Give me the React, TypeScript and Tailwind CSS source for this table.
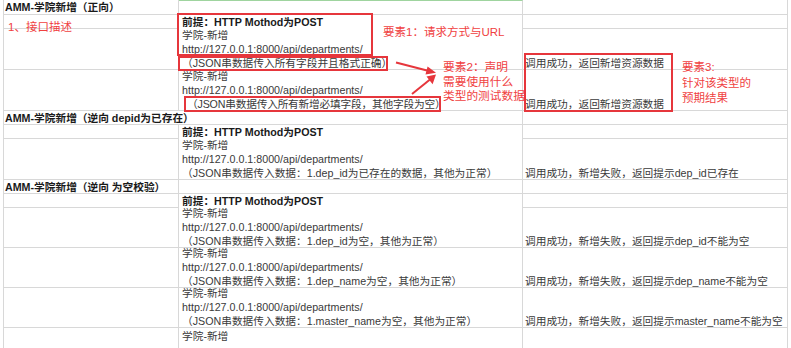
import React from "react";

const PRE = "前提：HTTP Mothod为POST";
const NAME = "学院-新增";
const URL = "http://127.0.0.1:8000/api/departments/";

function ACell({ text, h, noRight }: { text?: string; h: number; noRight?: boolean }) {
  return (
    <div
      className={
        "border-l border-b border-[#d8d8d8] pl-[1px] flex items-center whitespace-nowrap text-[10.7px] font-bold text-[#1a1a1a] leading-[14px] relative z-10 " +
        (noRight ? "" : "border-r ")
      }
      style={{ height: h }}
    >
      {text}
    </div>
  );
}

function PreCell({ h }: { h: number }) {
  return (
    <div className="border-r border-[#d8d8d8] pl-[3px] flex items-center whitespace-nowrap font-bold text-[#1a1a1a] leading-[14px]" style={{ height: h }}>
      {PRE}
    </div>
  );
}

function BodyCell({ h, json, shift }: { h: number; json: string; shift?: boolean }) {
  return (
    <div
      className="border-r border-b border-[#d8d8d8] pl-[3px] flex flex-col justify-end whitespace-nowrap text-[#3a3a3a] leading-[14px]"
      style={{ height: h }}
    >
      <div className="relative top-[1px]">
        <div>{NAME}</div>
        <div>{URL}</div>
        <div className={shift ? "pl-[5px] tracking-[-0.2px]" : ""}>{json}</div>
      </div>
    </div>
  );
}

function CCell({ h, text }: { h: number; text?: string }) {
  return (
    <div
      className="border-r border-b border-[#d8d8d8] pl-[2px] flex items-end whitespace-nowrap text-[#3a3a3a] leading-[14px]"
      style={{ height: h }}
    >
      <div className="relative top-[1px]">{text}</div>
    </div>
  );
}

function Empty({ h, green }: { h: number; green?: boolean }) {
  return (
    <div
      className={"border-r border-b border-[#d8d8d8] " + (green ? "border-t border-t-[#9fd49f]" : "")}
      style={{ height: h }}
    />
  );
}

export default function App() {
  return (
    <div className="relative w-[791px] h-[348px] overflow-hidden bg-white font-['Liberation_Sans','Noto_Sans_CJK_SC',sans-serif] text-[10.7px]">
      <div className="ml-[3px] grid grid-cols-[176px_344px_265px]">
        {/* Row 1 */}
        <ACell h={15} text="AMM-学院新增（正向）" />
        <Empty h={15} green />
        <Empty h={15} />
        {/* Row 2 */}
        <ACell h={14} />
        <PreCell h={14} />
        <Empty h={14} />
        {/* Row 3 */}
        <ACell h={41} />
        <BodyCell h={41} json="（JSON串数据传入所有字段并且格式正确）" />
        <CCell h={41} text="调用成功，返回新增资源数据" />
        {/* Row 4 */}
        <ACell h={41} />
        <BodyCell h={41} json="（JSON串数据传入所有新增必填字段，其他字段为空）" shift />
        <CCell h={41} text="调用成功，返回新增资源数据" />
        {/* Row 5 header */}
        <ACell h={14} noRight text="AMM-学院新增（逆向 depid为已存在）" />
        <Empty h={14} />
        <Empty h={14} />
        {/* Row 6 */}
        <ACell h={14} />
        <PreCell h={14} />
        <Empty h={14} />
        {/* Row 7 */}
        <ACell h={41} />
        <BodyCell h={41} json="（JSON串数据传入数据：1.dep_id为已存在的数据，其他为正常）" />
        <CCell h={41} text="调用成功，新增失败，返回提示dep_id已存在" />
        {/* Row 8 header */}
        <ACell h={14} text="AMM-学院新增（逆向 为空校验）" />
        <Empty h={14} />
        <Empty h={14} />
        {/* Row 9 */}
        <ACell h={14} />
        <PreCell h={14} />
        <Empty h={14} />
        {/* Row 10 */}
        <ACell h={40} />
        <BodyCell h={40} json="（JSON串数据传入数据：1.dep_id为空，其他为正常）" />
        <CCell h={40} text="调用成功，新增失败，返回提示dep_id不能为空" />
        {/* Row 11 */}
        <ACell h={40} />
        <BodyCell h={40} json="（JSON串数据传入数据：1.dep_name为空，其他为正常）" />
        <CCell h={40} text="调用成功，新增失败，返回提示dep_name不能为空" />
        {/* Row 12 */}
        <ACell h={40} />
        <BodyCell h={40} json="（JSON串数据传入数据：1.master_name为空，其他为正常）" />
        <CCell h={40} text="调用成功，新增失败，返回提示master_name不能为空" />
        {/* Row 13 */}
        <div className="border-l border-r border-[#d8d8d8]" style={{ height: 20 }} />
        <div className="border-r border-[#d8d8d8] pl-[3px] pt-[1px] whitespace-nowrap text-[#3a3a3a] leading-[14px]" style={{ height: 20 }}>
          {NAME}
        </div>
        <div className="border-r border-[#d8d8d8]" style={{ height: 20 }} />
      </div>

      {/* Annotations overlay */}
      <div className="pointer-events-none absolute inset-0 z-20">
        <div className="absolute left-[177px] top-[13px] w-[196px] h-[43px] border-2 border-[#e6363c]" />
        <div className="absolute left-[178px] top-[56px] w-[210px] h-[15px] border-2 border-[#e6363c]" />
        <div className="absolute left-[184px] top-[96px] w-[257px] h-[16px] border-2 border-[#e6363c]" />
        <div className="absolute left-[524px] top-[53px] w-[149px] h-[59px] border-2 border-[#e6363c]" />

        <div className="absolute left-[8px] top-[20px] text-[11.5px] leading-[14px] text-[#f0413f] whitespace-nowrap">1、接口描述</div>
        <div className="absolute left-[383px] top-[25px] text-[11.5px] leading-[14px] text-[#f0413f] whitespace-nowrap">要素1：请求方式与URL</div>
        <div className="absolute left-[443px] top-[60px] text-[11.7px] leading-[14.5px] text-[#f0413f] whitespace-nowrap">
          <div>要素2：声明</div>
          <div>需要使用什么</div>
          <div>类型的测试数据</div>
        </div>
        <div className="absolute left-[682px] top-[60px] text-[11.5px] leading-[15.5px] text-[#f0413f] whitespace-nowrap">
          <div>要素3:</div>
          <div>针对该类型的</div>
          <div>预期结果</div>
        </div>

        <svg className="absolute left-0 top-0" width="791" height="348" viewBox="0 0 791 348">
          <line x1="396" y1="62.5" x2="428" y2="70.8" stroke="#e6363c" strokeWidth="2" />
          <polygon points="436,72.8 425.5,74.5 427.6,66.4" fill="#e6363c" />
          <line x1="412" y1="94" x2="430" y2="79.5" stroke="#e6363c" strokeWidth="2" />
          <polygon points="436,74.5 432.6,84.2 426.5,76.6" fill="#e6363c" />
        </svg>
      </div>
    </div>
  );
}
